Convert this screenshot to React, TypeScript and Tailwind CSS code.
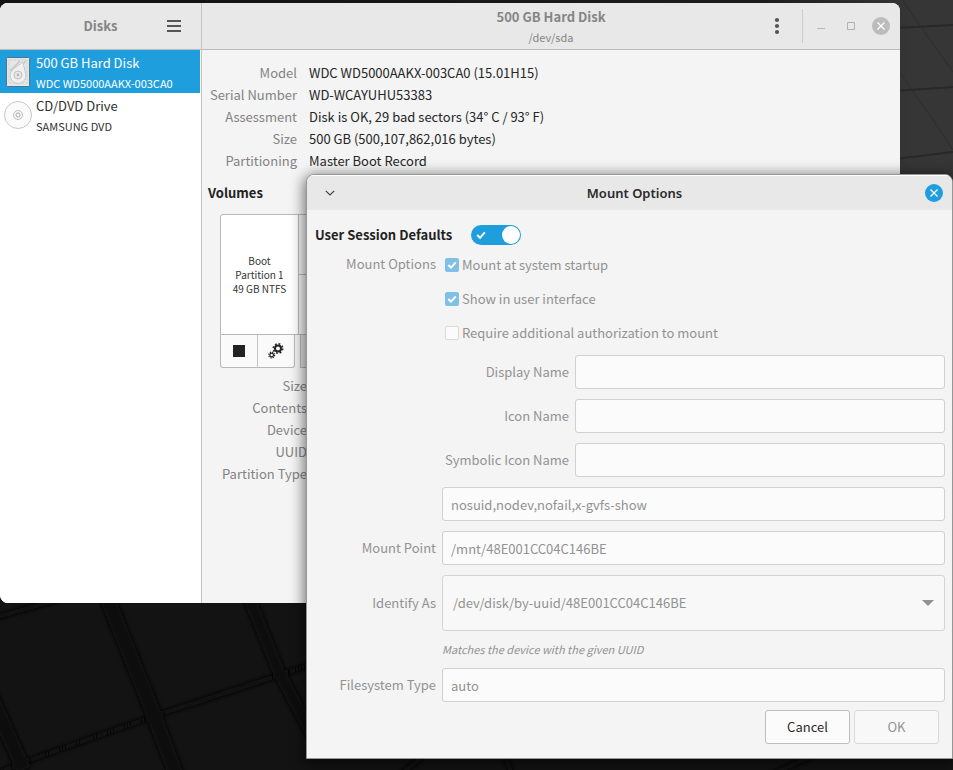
import { useState } from 'react';
import type { ReactNode } from 'react';

const diskInfo = [
  ['Model', 'WDC WD5000AAKX-003CA0 (15.01H15)'],
  ['Serial Number', 'WD-WCAYUHU53383'],
  ['Assessment', 'Disk is OK, 29 bad sectors (34° C / 93° F)'],
  ['Size', '500 GB (500,107,862,016 bytes)'],
  ['Partitioning', 'Master Boot Record'],
];

const volumeInfo = ['Size', 'Contents', 'Device', 'UUID', 'Partition Type'];

const FIELD =
  'h-[34px] w-full min-w-0 rounded-[3px] border border-[#d0d0d0] bg-[#fbfbfb] px-2 text-[#929292]';

function Wallpaper() {
  return (
    <svg
      className="absolute inset-0 h-full w-full"
      viewBox="0 0 953 770"
      preserveAspectRatio="none"
      aria-hidden="true"
    >
      <defs>
        <linearGradient id="desk" x1="0" y1="0" x2="1" y2="0">
          <stop offset="0.2" stopColor="#131313" />
          <stop offset="0.8" stopColor="#1d1d1d" />
          <stop offset="0.96" stopColor="#363636" />
        </linearGradient>
        <filter id="soft">
          <feGaussianBlur stdDeviation="2" />
        </filter>
      </defs>
      <rect width="953" height="770" fill="url(#desk)" />
      <rect y="603" width="953" height="167" fill="#131313" />
      <g stroke="#070707" fill="none" filter="url(#soft)">
        <path d="M-10 619L60 599" strokeWidth="5" />
        <path d="M-10 776L30 760L160 714L280 675L320 661" strokeWidth="5" />
        <path d="M104 590L152 710L180 785" strokeWidth="16" />
        <path d="M-12 690L24 770" strokeWidth="16" />
        <path d="M246 590L278 670L320 750" strokeWidth="13" />
        <path d="M400 775L425 755M505 755L512 775M770 775L815 755" strokeWidth="5" />
      </g>
      <g stroke="#282828" fill="none">
        <path d="M895 28L953 25M895 91L953 87M895 159L953 152" strokeWidth="2" />
        <path d="M895 -10L953 72M895 66L940 130L953 150" stroke="#2d2d2d" />
      </g>
    </svg>
  );
}

function HardDiskIcon() {
  return (
    <svg width="24" height="30" viewBox="0 0 24 30" aria-hidden="true">
      <rect x="0.5" y="0.5" width="23" height="29" rx="1" fill="#e6e6e6" stroke="#4a7694" />
      <path d="M3 3H21V26H3Z" fill="none" stroke="#d2d2d2" strokeDasharray="3 1" />
      <path d="M20 3L16 9.5M4 14L14 4" stroke="#c2c2c2" strokeWidth="1.2" />
      <path
        d="M12 26.5A8 8 0 0 1 4.5 16C6 12 12 9 17 5L19.5 16A8 8 0 0 1 12 26.5Z"
        fill="#f0f0f0"
        stroke="#c8c8c8"
      />
      <circle cx="12" cy="18" r="4" fill="#e6e6e6" stroke="#c2c2c2" />
      <circle cx="12" cy="18" r="1.2" fill="#b4b4b4" />
    </svg>
  );
}

function DiscIcon() {
  return (
    <svg width="28" height="28" viewBox="0 0 28 28" aria-hidden="true">
      <circle cx="14" cy="14" r="13.5" fill="#fbfbfb" stroke="#c6c6c6" />
      <circle cx="14" cy="14" r="4.5" fill="#f4f4f4" stroke="#c0c0c0" />
      <circle cx="14" cy="14" r="2" fill="#fff" stroke="#a8a8a8" />
    </svg>
  );
}

function CloseIcon({ fill }: { fill: string }) {
  return (
    <svg width="18" height="18" viewBox="0 0 18 18" aria-hidden="true">
      <circle cx="9" cy="9" r="9" fill={fill} />
      <path d="M5.5 5.5L12.5 12.5M12.5 5.5L5.5 12.5" stroke="#fff" strokeWidth="1.3" />
    </svg>
  );
}

function GearsIcon() {
  return (
    <svg width="16" height="16" viewBox="0 0 16 16" fill="none" stroke="#222" aria-hidden="true">
      <circle cx="10" cy="5.5" r="3" strokeWidth="2" />
      <circle cx="10" cy="5.5" r="4.7" strokeWidth="1.6" strokeDasharray="1.8 1.89" />
      <circle cx="3.7" cy="12" r="1.8" strokeWidth="1.2" />
      <circle cx="3.7" cy="12" r="2.9" strokeWidth="1.2" strokeDasharray="1.2 1.08" />
    </svg>
  );
}

interface DriveProps {
  name: string;
  detail: string;
  icon: ReactNode;
  selected: boolean;
  onSelect: () => void;
}

function Drive({ name, detail, icon, selected, onSelect }: DriveProps) {
  return (
    <button
      onClick={onSelect}
      className={`flex h-[43px] w-full items-center gap-1 pl-1 text-left ${
        selected ? 'bg-[#1f9ede] text-white' : 'text-[#303030]'
      }`}
    >
      <span className="flex w-7 justify-center">{icon}</span>
      <span className="flex flex-col whitespace-nowrap">
        <span className="leading-[22px]">{name}</span>
        <span className="text-[11px] leading-[18px]">{detail}</span>
      </span>
    </button>
  );
}

function Sidebar() {
  const [selected, setSelected] = useState(0);
  return (
    <aside className="flex w-[202px] shrink-0 flex-col border-r border-[#c4c4c4] bg-white">
      <header className="relative flex h-[47px] shrink-0 items-center justify-center border-b border-[#bcbcbc] bg-[#e8e8e8]">
        <h1 className="font-bold text-[#858585]">Disks</h1>
        <button aria-label="Menu" className="absolute right-5">
          <svg width="14" height="14" viewBox="0 0 14 14" aria-hidden="true">
            <path d="M0 2H14M0 7H14M0 12H14" stroke="#555" strokeWidth="2" />
          </svg>
        </button>
      </header>
      <nav className="pr-px">
        <Drive
          name="500 GB Hard Disk"
          detail="WDC WD5000AAKX-003CA0"
          icon={<HardDiskIcon />}
          selected={selected === 0}
          onSelect={() => setSelected(0)}
        />
        <Drive
          name="CD/DVD Drive"
          detail="SAMSUNG DVD"
          icon={<DiscIcon />}
          selected={selected === 1}
          onSelect={() => setSelected(1)}
        />
      </nav>
    </aside>
  );
}

function DisksWindow() {
  return (
    <section className="absolute top-[3px] right-[53px] bottom-[167px] left-0 flex overflow-hidden rounded-lg rounded-br-none bg-[#f4f4f4]">
      <Sidebar />
      <main className="flex min-w-0 flex-1 flex-col">
        <header className="relative flex h-[47px] shrink-0 items-center justify-end border-b border-[#bcbcbc] bg-[#e8e8e8]">
          <div className="absolute inset-x-0 top-[3px] text-center text-[#858585]">
            <h2 className="leading-[22px] font-bold">500 GB Hard Disk</h2>
            <p className="text-[11px] leading-[18px]">/dev/sda</p>
          </div>
          <div className="relative flex items-center pr-[10px]">
            <button aria-label="Drive options" className="mr-[22px]">
              <svg width="6" height="18" viewBox="0 0 6 18" fill="#555" aria-hidden="true">
                <circle cx="3" cy="3" r="2.1" />
                <circle cx="3" cy="9" r="2.1" />
                <circle cx="3" cy="15" r="2.1" />
              </svg>
            </button>
            <span className="mr-[14px] h-[34px] w-px bg-[#cccccc]" />
            <div className="flex items-center gap-4">
              <button aria-label="Minimize">
                <svg width="10" height="10" viewBox="0 0 10 10" aria-hidden="true">
                  <path d="M0 7.5H8" stroke="#b8b8b8" />
                </svg>
              </button>
              <button aria-label="Maximize" className="ml-1">
                <svg width="9" height="9" viewBox="0 0 9 9" aria-hidden="true">
                  <path d="M0.5 0.5H7.5V7.5H0.5Z" fill="none" stroke="#b0b0b0" />
                </svg>
              </button>
              <button aria-label="Close">
                <CloseIcon fill="#bcbcbc" />
              </button>
            </div>
          </div>
        </header>

        <div className="px-[6px] pt-3">
          <dl className="grid grid-cols-[89px_1fr] gap-x-3 leading-[22px]">
            {diskInfo.map(([label, value]) => (
              <div key={label} className="contents">
                <dt className="text-right whitespace-nowrap text-[#838383]">{label}</dt>
                <dd className="text-[#262626]">{value}</dd>
              </div>
            ))}
          </dl>
          <h3 className="mt-[10px] leading-[22px] font-bold text-[#222]">Volumes</h3>

          <div className="mt-[10px] ml-3">
            <div className="flex h-[121px] rounded-t-[3px] border border-[#b8b8b8] bg-white">
              <div className="flex w-[78px] items-center border-r border-[#b8b8b8] text-center text-[10px] leading-[14px] text-[#333]">
                <p className="w-full">
                  Boot
                  <br />
                  Partition 1
                  <br />
                  49 GB NTFS
                </p>
              </div>
              <div className="flex-1 bg-[#f4f4f4]">
                <div className="h-[60px] border-b border-[#b8b8b8]" />
              </div>
            </div>
            <div className="flex h-[33px] gap-[5px]">
              <div className="flex rounded-b-[3px] border border-t-0 border-[#b8b8b8] bg-[#fafafa]">
                <button
                  aria-label="Unmount"
                  className="flex w-[37px] items-center justify-center border-r border-[#c4c4c4]"
                >
                  <span className="h-3 w-3 bg-[#222]" />
                </button>
                <button aria-label="Partition options" className="flex w-[36px] items-center justify-center">
                  <GearsIcon />
                </button>
              </div>
              <div className="w-[37px] border border-t-0 border-[#b8b8b8] bg-[#e4e4e4]" />
            </div>
          </div>

          <ul className="mt-[7px] ml-3 w-[87px] text-right leading-[22px] whitespace-nowrap text-[#838383]">
            {volumeInfo.map((label) => (
              <li key={label}>{label}</li>
            ))}
          </ul>
        </div>
      </main>
    </section>
  );
}

function Tick() {
  return (
    <svg
      className="pointer-events-none absolute inset-0 hidden peer-checked:block"
      width="14"
      height="14"
      viewBox="0 0 14 14"
      aria-hidden="true"
    >
      <path d="M3.3 7L6 9.6L10.8 4.4" fill="none" stroke="#fff" strokeWidth="2" />
    </svg>
  );
}

function CheckRow({ label, checked }: { label: string; checked?: boolean }) {
  return (
    <label className="ml-[3px] flex h-[34px] items-center gap-[3px]">
      <span className="relative h-[14px] w-[14px] shrink-0">
        <input
          type="checkbox"
          defaultChecked={checked}
          disabled
          className="peer block h-[14px] w-[14px] appearance-none rounded-[2px] border border-[#dadada] bg-[#fbfbfb] checked:border-[#7fc0e6] checked:bg-[#7fc0e6]"
        />
        <Tick />
      </span>
      {label}
    </label>
  );
}

function NameRow({ id, label }: { id: string; label: string }) {
  return (
    <div className="grid grid-cols-[127px_1fr] items-center gap-[6px]">
      <label htmlFor={id} className="text-right whitespace-nowrap">
        {label}
      </label>
      <input id={id} type="text" disabled className={FIELD} />
    </div>
  );
}

function FormRow({ id, label, children }: { id: string; label?: string; children: ReactNode }) {
  return (
    <div className="grid grid-cols-[121px_1fr] items-center gap-[6px]">
      {label ? (
        <label htmlFor={id} className="text-right whitespace-nowrap">
          {label}
        </label>
      ) : (
        <span />
      )}
      {children}
    </div>
  );
}

function MountDialog() {
  return (
    <section
      role="dialog"
      aria-label="Mount Options"
      className="absolute top-[174px] right-0 left-[306px] overflow-hidden rounded-t-lg border border-[#969696] bg-[#f4f4f4] shadow-[0_3px_14px_2px_rgba(0,0,0,0.55)]"
    >
      <header className="flex h-[35px] items-center border-t border-white bg-[#e8e8e8] px-[9px] pb-px">
        <button aria-label="Window menu" className="w-7 pl-[9px]">
          <svg width="10" height="6" viewBox="0 0 10 6" aria-hidden="true">
            <path d="M0.8 0.8L5 5L9.2 0.8" fill="none" stroke="#444" strokeWidth="1.2" />
          </svg>
        </button>
        <h2 className="flex-1 text-center font-['Noto_Sans'] text-[13px] font-semibold text-[#2a2a2a]">
          Mount Options
        </h2>
        <button aria-label="Close dialog">
          <CloseIcon fill="#1f9ede" />
        </button>
      </header>

      <form className="pt-[15px] pr-[7px] pb-[14px] pl-2 text-[#929292]" onSubmit={(e) => e.preventDefault()}>
        <label className="flex h-5 w-fit items-center gap-[13px] font-bold text-[#222]">
          <span className="min-w-[143px]">User Session Defaults</span>
          <span className="relative h-5 w-[50px]">
            <input
              type="checkbox"
              role="switch"
              defaultChecked
              className="peer block h-5 w-[50px] appearance-none rounded-full bg-[#c8c8c8] checked:bg-[#1f9ede]"
            />
            <span className="pointer-events-none absolute top-px left-px h-[18px] w-[18px] rounded-full bg-white peer-checked:left-[31px]" />
            <svg
              className="pointer-events-none absolute top-[5px] left-[5px] hidden peer-checked:block"
              width="10"
              height="10"
              viewBox="0 0 10 10"
              aria-hidden="true"
            >
              <path d="M1.2 5L4 7.8L8.8 2.4" fill="none" stroke="#fff" strokeWidth="2" />
            </svg>
          </span>
        </label>

        <fieldset className="mt-[3px] grid grid-cols-[121px_1fr] gap-x-[6px]">
          <span className="text-right leading-[32px]">Mount Options</span>
          <div>
            <CheckRow label="Mount at system startup" checked />
            <CheckRow label="Show in user interface" checked />
            <CheckRow label="Require additional authorization to mount" />
          </div>
        </fieldset>

        <div className="mt-[5px] flex flex-col gap-[10px]">
          <div className="ml-[127px] flex flex-col gap-[10px]">
            <NameRow id="display-name" label="Display Name" />
            <NameRow id="icon-name" label="Icon Name" />
            <NameRow id="symbolic-icon-name" label="Symbolic Icon Name" />
          </div>
          <FormRow id="options">
            <input
              id="options"
              aria-label="Options"
              disabled
              defaultValue="nosuid,nodev,nofail,x-gvfs-show"
              className={FIELD}
            />
          </FormRow>
          <FormRow id="mount-point" label="Mount Point">
            <input id="mount-point" disabled defaultValue="/mnt/48E001CC04C146BE" className={FIELD} />
          </FormRow>
          <FormRow id="identify-as" label="Identify As">
            <span className="relative">
              <select
                id="identify-as"
                disabled
                className="block h-14 w-full appearance-none rounded-[3px] border border-[#d4d4d4] bg-[#f8f8f8] px-[10px] text-[#929292] opacity-100"
              >
                <option>/dev/disk/by-uuid/48E001CC04C146BE</option>
              </select>
              <svg
                className="pointer-events-none absolute top-[25px] right-[11px]"
                width="12"
                height="6"
                viewBox="0 0 12 6"
                aria-hidden="true"
              >
                <path d="M0 0H12L6 6Z" fill="#929292" />
              </svg>
            </span>
          </FormRow>
          <p className="ml-[127px] text-[11px] leading-[17px] italic">Matches the device with the given UUID</p>
          <FormRow id="filesystem-type" label="Filesystem Type">
            <input id="filesystem-type" disabled defaultValue="auto" className={FIELD} />
          </FormRow>
        </div>

        <div className="mt-2 mr-[6px] flex justify-end gap-1">
          <button
            type="button"
            className="h-[34px] w-[85px] rounded-[3px] border border-[#bdbdbd] bg-[#fbfbfb] text-[#2a2a2a]"
          >
            Cancel
          </button>
          <button
            type="submit"
            disabled
            className="h-[34px] w-[85px] rounded-[3px] border border-[#d8d8d8] bg-[#f8f8f8]"
          >
            OK
          </button>
        </div>
      </form>
    </section>
  );
}

export default function App() {
  return (
    <div className="relative min-h-screen overflow-hidden bg-[#131313] font-['Noto_Sans_CJK_SC',sans-serif] text-[13px] leading-5">
      <Wallpaper />
      <DisksWindow />
      <MountDialog />
    </div>
  );
}
